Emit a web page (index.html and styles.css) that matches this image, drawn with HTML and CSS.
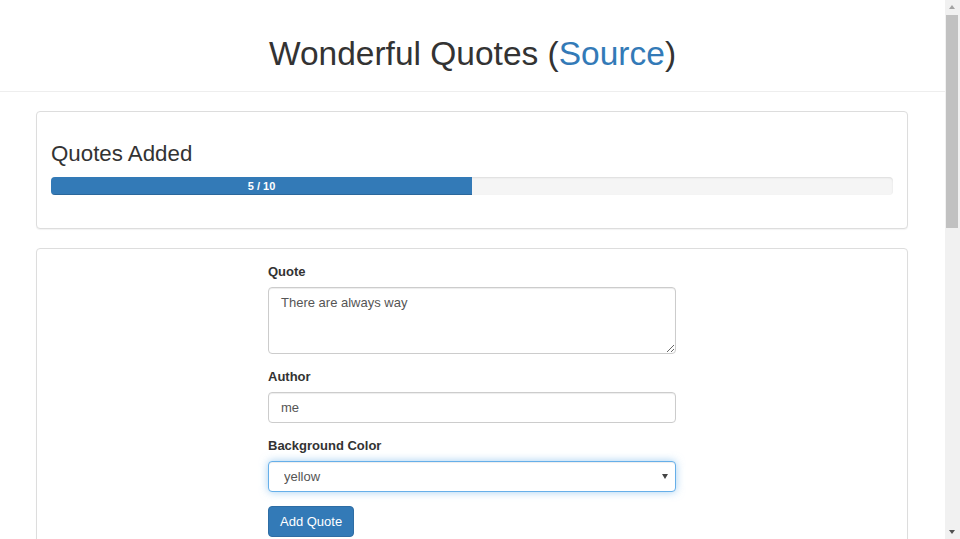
FILE: index.html
```html
<!DOCTYPE html>
<html lang="en">
<head>
<meta charset="utf-8">
<title>Wonderful Quotes</title>
<link rel="stylesheet" href="styles.css">
</head>
<body>
<div class="page">
  <header class="page-header">
    <h1 class="title">Wonderful Quotes (<a href="#" class="source">Source</a>)</h1>
  </header>
  <main class="container">
    <section class="panel panel-progress">
      <h3 class="panel-title">Quotes Added</h3>
      <div class="progress">
        <div class="progress-bar" style="width: 50%">5 / 10</div>
      </div>
    </section>
    <section class="panel panel-form">
      <form class="quote-form">
        <div class="form-group">
          <label class="form-label" for="quote">Quote</label>
          <textarea id="quote" class="form-control textarea">There are always way</textarea>
        </div>
        <div class="form-group">
          <label class="form-label" for="author">Author</label>
          <input id="author" class="form-control" type="text" value="me">
        </div>
        <div class="form-group last">
          <label class="form-label" for="color">Background Color</label>
          <div class="select-wrap">
            <select id="color" class="form-control select focused">
              <option>yellow</option>
              <option>green</option>
              <option>blue</option>
            </select>
            <span class="select-arrow"></span>
          </div>
        </div>
        <button type="button" class="btn btn-primary">Add Quote</button>
      </form>
    </section>
  </main>
</div>
<div class="scrollbar" aria-hidden="true">
  <span class="sb-arrow sb-up"></span>
  <span class="sb-thumb"></span>
  <span class="sb-arrow sb-down"></span>
</div>
</body>
</html>
```
FILE: styles.css
```css
* { box-sizing: border-box; }
html, body { margin: 0; padding: 0; }
body {
  font-family: "Liberation Sans", Arial, Helvetica, sans-serif;
  font-size: 13px;
  line-height: 1.43;
  color: #333;
  background: #fff;
  overflow: hidden;
}
.page {
  width: 945px;
}
.page-header {
  padding: 35px 0 18px;
  border-bottom: 1px solid #eee;
  text-align: center;
}
.title {
  margin: 0;
  font-size: 33.5px;
  font-weight: 500;
  line-height: 38px;
  color: #333;
}
.source { color: #337ab7; text-decoration: none; }
.container {
  margin: 19px 37px 0 36px;
}
.panel {
  border: 1px solid #ddd;
  border-radius: 4px;
  background: #fff;
  box-shadow: 0 1px 1px rgba(0,0,0,.05);
  margin-bottom: 19px;
}
.panel-progress { padding: 10px 14px; }
.panel-title {
  margin: 19px 0 10px;
  font-size: 22.3px;
  font-weight: 500;
  line-height: 26px;
  color: #333;
}
.progress {
  height: 18px;
  margin-bottom: 23px;
  background: #f5f5f5;
  border-radius: 4px;
  overflow: hidden;
  box-shadow: inset 0 1px 2px rgba(0,0,0,.1);
}
.progress-bar {
  height: 100%;
  background: #337ab7;
  color: #fff;
  font-size: 11px;
  font-weight: bold;
  line-height: 18px;
  text-align: center;
  box-shadow: inset 0 -1px 0 rgba(0,0,0,.15);
}
.panel-form {
  padding: 13px 14px 40px;
}
.quote-form {
  width: 408px;
  margin: 0 auto;
}
.form-group { margin-bottom: 13px; }
.form-group.last { margin-bottom: 14px; }
.form-label {
  display: block;
  font-weight: bold;
  line-height: 19px;
  margin-bottom: 6px;
}
.form-control {
  display: block;
  width: 100%;
  height: 31px;
  padding: 6px 12px;
  font-family: inherit;
  font-size: 13px;
  line-height: 17px;
  color: #555;
  background: #fff;
  border: 1px solid #ccc;
  border-radius: 4px;
  box-shadow: inset 0 1px 1px rgba(0,0,0,.075);
  margin: 0;
}
.textarea {
  height: 67px;
  padding-top: 6px;
  resize: vertical;
}
.select-wrap { position: relative; }
.select {
  -webkit-appearance: none;
  appearance: none;
  padding: 6px 24px 6px 15px;
}
.select.focused {
  border-color: #66afe9;
  box-shadow: inset 0 1px 1px rgba(0,0,0,.075), 0 0 8px rgba(102,175,233,.6);
  outline: 0;
}
.select-arrow {
  position: absolute;
  right: 8px;
  top: 13px;
  width: 0;
  height: 0;
  border-left: 3.5px solid transparent;
  border-right: 3.5px solid transparent;
  border-top: 5px solid #444;
  pointer-events: none;
}
.btn {
  display: inline-block;
  height: 31px;
  padding: 0 11px;
  font-family: inherit;
  font-size: 13px;
  line-height: 29px;
  border: 1px solid transparent;
  border-radius: 4px;
}
.btn-primary {
  color: #fff;
  background: #337ab7;
  border-color: #2e6da4;
}
.scrollbar {
  position: fixed;
  top: 0;
  right: 0;
  width: 15px;
  height: 100%;
  background: #f1f1f1;
}
.sb-thumb {
  position: absolute;
  left: 1px;
  right: 2px;
  top: 15px;
  height: 213px;
  background: #c1c1c1;
}
.sb-arrow {
  position: absolute;
  left: 4px;
  width: 0;
  height: 0;
  border-left: 3.5px solid transparent;
  border-right: 3.5px solid transparent;
}
.sb-up {
  top: 5px;
  border-bottom: 4px solid #a3a3a3;
}
.sb-down {
  bottom: 5px;
  border-top: 4px solid #505050;
}
```
